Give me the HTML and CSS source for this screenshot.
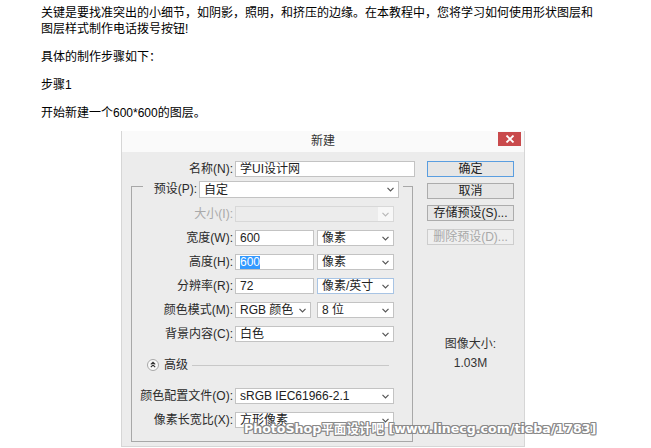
FILE: index.html
```html
<!DOCTYPE html>
<html lang="zh-CN">
<head>
<meta charset="utf-8">
<title>新建</title>
<link rel="stylesheet" href="styles.css">
</head>
<body>
<div class="article">
  <p>关键是要找准突出的小细节，如阴影，照明，和挤压的边缘。在本教程中，您将学习如何使用形状图层和图层样式制作电话拨号按钮!</p>
  <p>具体的制作步骤如下：</p>
  <p>步骤1</p>
  <p class="last">开始新建一个600*600的图层。</p>
</div>

<div class="dialog">
  <div class="titlebar">
    <span class="title">新建</span>
    <span class="close"><svg width="10" height="8" viewBox="0 0 10 8"><path d="M1.5 0.5 L8.5 7.5 M8.5 0.5 L1.5 7.5" stroke="#fff" stroke-width="1.8" fill="none"/></svg></span>
  </div>
  <div class="dlg-body">
    <div class="form">
      <div class="name-row">
        <span class="label">名称(N):</span>
        <span class="field">学UI设计网</span>
      </div>
      <div class="group">
        <div class="legend">
          <span class="seg seg-left"></span>
          <span class="label legend-label">预设(P):</span>
          <span class="select preset"><span>自定</span><svg class="chev" width="7" height="5" viewBox="0 0 7 5"><path d="M0.5 0.8 L3.5 3.8 L6.5 0.8" fill="none" stroke="#555" stroke-width="1.2"/></svg></span>
          <span class="seg seg-right"></span>
        </div>
        <div class="grid">
          <span class="label disabled">大小(I):</span>
          <span class="select off"><span></span><span class="off-btn"><svg class="chev" width="7" height="5" viewBox="0 0 7 5"><path d="M0.5 0.8 L3.5 3.8 L6.5 0.8" fill="none" stroke="#b8b8b8" stroke-width="1.2"/></svg></span></span>

          <span class="label">宽度(W):</span>
          <span class="pair">
            <span class="field w79">600</span>
            <span class="select w77"><span>像素</span><svg class="chev" width="7" height="5" viewBox="0 0 7 5"><path d="M0.5 0.8 L3.5 3.8 L6.5 0.8" fill="none" stroke="#555" stroke-width="1.2"/></svg></span>
          </span>

          <span class="label">高度(H):</span>
          <span class="pair">
            <span class="field w79"><span class="sel">600</span></span>
            <span class="select w77"><span>像素</span><svg class="chev" width="7" height="5" viewBox="0 0 7 5"><path d="M0.5 0.8 L3.5 3.8 L6.5 0.8" fill="none" stroke="#555" stroke-width="1.2"/></svg></span>
          </span>

          <span class="label">分辨率(R):</span>
          <span class="pair">
            <span class="field w79">72</span>
            <span class="select w77 hover"><span>像素/英寸</span><svg class="chev" width="7" height="5" viewBox="0 0 7 5"><path d="M0.5 0.8 L3.5 3.8 L6.5 0.8" fill="none" stroke="#555" stroke-width="1.2"/></svg></span>
          </span>

          <span class="label">颜色模式(M):</span>
          <span class="pair pair-wide">
            <span class="select w76"><span>RGB 颜色</span><svg class="chev" width="7" height="5" viewBox="0 0 7 5"><path d="M0.5 0.8 L3.5 3.8 L6.5 0.8" fill="none" stroke="#555" stroke-width="1.2"/></svg></span>
            <span class="select w77"><span>8 位</span><svg class="chev" width="7" height="5" viewBox="0 0 7 5"><path d="M0.5 0.8 L3.5 3.8 L6.5 0.8" fill="none" stroke="#555" stroke-width="1.2"/></svg></span>
          </span>

          <span class="label">背景内容(C):</span>
          <span class="select"><span>白色</span><svg class="chev" width="7" height="5" viewBox="0 0 7 5"><path d="M0.5 0.8 L3.5 3.8 L6.5 0.8" fill="none" stroke="#555" stroke-width="1.2"/></svg></span>
        </div>

        <div class="advanced">
          <svg class="adv-icon" width="12" height="12" viewBox="0 0 12 12"><circle cx="6" cy="6" r="5.5" fill="#f9f9f9" stroke="#a8a8a8" stroke-width="1"/><path d="M3.8 5.4 L6 3.3 L8.2 5.4 M3.8 8.1 L6 6 L8.2 8.1" fill="none" stroke="#333" stroke-width="1.1"/></svg>
          <span class="adv-text">高级</span>
          <span class="rule"></span>
        </div>

        <div class="grid grid-adv">
          <span class="label">颜色配置文件(O):</span>
          <span class="select"><span>sRGB IEC61966-2.1</span><svg class="chev" width="7" height="5" viewBox="0 0 7 5"><path d="M0.5 0.8 L3.5 3.8 L6.5 0.8" fill="none" stroke="#555" stroke-width="1.2"/></svg></span>

          <span class="label">像素长宽比(X):</span>
          <span class="select"><span>方形像素</span><svg class="chev" width="7" height="5" viewBox="0 0 7 5"><path d="M0.5 0.8 L3.5 3.8 L6.5 0.8" fill="none" stroke="#555" stroke-width="1.2"/></svg></span>
        </div>
      </div>
    </div>

    <div class="side">
      <span class="btn primary">确定</span>
      <span class="btn">取消</span>
      <span class="btn">存储预设(S)...</span>
      <span class="btn btn-off">删除预设(D)...</span>
      <div class="info">
        <div>图像大小:</div>
        <div class="info-val">1.03M</div>
      </div>
    </div>
  </div>
</div>

<div class="watermark">PhotoShop平面设计吧 [www.linecg.com/tieba/1783]</div>
</body>
</html>
```

FILE: styles.css
```css
html, body {
  margin: 0;
  padding: 0;
  background: #ffffff;
}

body {
  font-family: "Liberation Sans", "Noto Sans CJK SC", sans-serif;
  font-size: 12px;
  color: #000;
  position: relative;
  height: 448px;
  overflow: hidden;
}

.article {
  padding: 5px 0 0 41px;
  width: 560px;
}

.article p {
  margin: 0 0 12px 0;
  line-height: 16px;
}

.article p.last {
  margin-bottom: 10px;
}

/* dialog */
.dialog {
  margin-left: 121px;
  width: 404px;
  box-sizing: border-box;
  border-left: 1px solid #d6d6d6;
  border-right: 1px solid #d6d6d6;
  border-bottom: 1px solid #d6d6d6;
  background: #ececec;
}

.titlebar {
  height: 21px;
  background: #fafafa;
  display: grid;
  grid-template-columns: 1fr auto 1fr;
  align-items: start;
}

.title {
  grid-column: 2;
  line-height: 21px;
  color: #333;
  font-size: 12px;
}

.close {
  grid-column: 3;
  justify-self: end;
  margin: 1px 3px 0 0;
  width: 23px;
  height: 14px;
  background: #c94a4c;
  display: flex;
  align-items: center;
  justify-content: center;
}

.dlg-body {
  display: flex;
  padding: 9px 10px 4px 0;
  gap: 12px;
  color: #2a2a2a;
}

.form {
  width: 293px;
  flex: none;
}

.label {
  text-align: right;
  line-height: 16px;
  white-space: nowrap;
  color: #2a2a2a;
}

.label.disabled {
  color: #a9a9a9;
}

.name-row {
  display: grid;
  grid-template-columns: 111px 180px;
  column-gap: 2px;
  height: 16px;
}

.field {
  display: block;
  box-sizing: border-box;
  height: 16px;
  border: 1px solid #c3c3c3;
  background: #fff;
  padding-left: 4px;
  line-height: 14px;
  color: #222;
  white-space: nowrap;
  overflow: hidden;
}

.field .sel {
  background: #3399ff;
  color: #fff;
  display: inline-block;
  line-height: 13px;
}

.select {
  display: flex;
  align-items: center;
  justify-content: space-between;
  box-sizing: border-box;
  height: 16px;
  border: 1px solid #c3c3c3;
  background: #fff;
  padding: 0 4px 0 4px;
  line-height: 14px;
  color: #222;
  white-space: nowrap;
}

.select.hover {
  border-color: #a8c4e4;
}

.select.off {
  background: #ececec;
  border-color: #d8d8d8;
  padding: 0;
}

.off-btn {
  width: 15px;
  height: 14px;
  background: #f7f7f7;
  display: flex;
  align-items: center;
  justify-content: center;
}

.chev {
  flex: none;
}

/* group box */
.group {
  margin: 9px 0 0 9px;
  width: 282px;
  box-sizing: border-box;
  border-left: 1px solid #a8a8a8;
  border-right: 1px solid #a8a8a8;
  border-bottom: 1px solid #a8a8a8;
  display: flex;
  flex-direction: column;
  padding-bottom: 13px;
}

.legend {
  display: flex;
  align-items: flex-start;
  height: 17px;
  margin-top: -5px;
}

.seg {
  margin-top: 5px;
  border-top: 1px solid #a8a8a8;
  height: 0;
}

.seg-left {
  width: 11px;
  flex: none;
}

.seg-right {
  flex: 1;
  margin-left: 4px;
}

.legend-label {
  width: 54px;
  flex: none;
  line-height: 17px;
  margin-right: 2px;
}

.select.preset {
  width: 200px;
  height: 17px;
  flex: none;
}

.grid {
  display: grid;
  grid-template-columns: 101px 159px;
  column-gap: 2px;
  row-gap: 8px;
  grid-auto-rows: 16px;
  margin-top: 8px;
}

.pair {
  display: flex;
  gap: 3px;
}

.pair-wide {
  gap: 6px;
}

.w79 { width: 79px; }
.w77 { width: 77px; }
.w76 { width: 76px; }

.advanced {
  display: flex;
  align-items: center;
  height: 14px;
  margin-top: 16px;
  padding-left: 15px;
}

.adv-icon {
  flex: none;
}

.adv-text {
  margin-left: 5px;
  color: #2a2a2a;
  line-height: 14px;
}

.rule {
  width: 197px;
  margin-left: 4px;
  border-top: 1px solid #c8c8c8;
}

.grid-adv {
  margin-top: 16px;
}

/* side buttons */
.side {
  width: 87px;
  flex: none;
  display: flex;
  flex-direction: column;
  gap: 6px;
}

.btn {
  display: block;
  box-sizing: border-box;
  height: 16px;
  border: 1px solid #acacac;
  background: #e6e6e6;
  text-align: center;
  line-height: 14px;
  color: #222;
  white-space: nowrap;
}

.btn.primary {
  border-color: #5a9ee0;
}

.btn.btn-off {
  color: #a8a8a8;
  border-color: #cdcdcd;
  background: #efefef;
  margin-top: 2px;
}

.info {
  margin-top: 85px;
  text-align: center;
  line-height: 16px;
  color: #333;
}

.info-val {
  margin-top: 3px;
}

/* watermark overlay */
.watermark {
  position: absolute;
  left: 244px;
  top: 420px;
  font-family: "DejaVu Sans", "Noto Sans CJK SC", sans-serif;
  font-weight: bold;
  font-size: 12.6px;
  line-height: 18px;
  color: #ffffff;
  white-space: nowrap;
  text-shadow:
    1px 0 0 #8a8a8a, -1px 0 0 #8a8a8a, 0 1px 0 #8a8a8a, 0 -1px 0 #8a8a8a,
    1px 1px 0 #8a8a8a, -1px -1px 0 #8a8a8a, 1px -1px 0 #8a8a8a, -1px 1px 0 #8a8a8a;
}
```
